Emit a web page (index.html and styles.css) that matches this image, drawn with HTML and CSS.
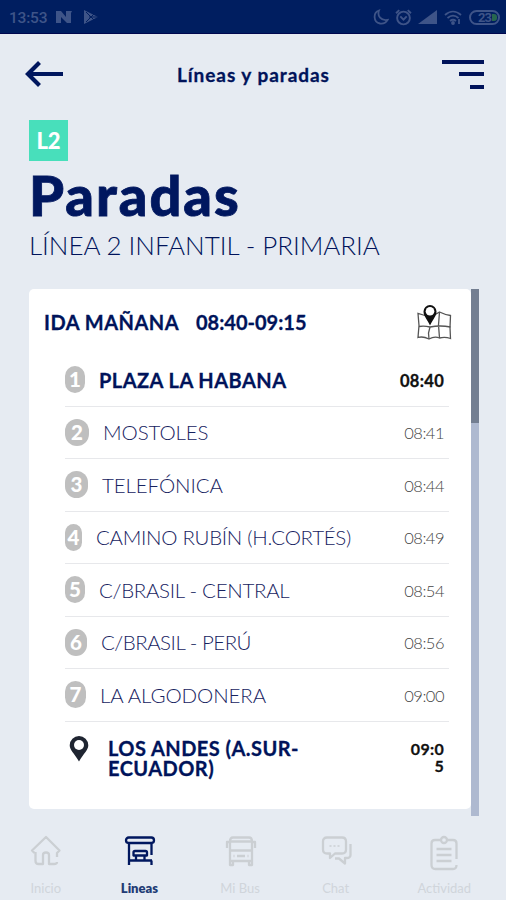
FILE: index.html
```html
<!DOCTYPE html>
<html lang="es">
<head>
<meta charset="utf-8">
<title>Líneas y paradas</title>
<link rel="stylesheet" href="styles.css">
</head>
<body>
<div class="status">
  <span class="clock">13:53</span>
  <svg class="s-n" width="16" height="14" viewBox="0 0 16 14"><path d="M0 13V1h5l5 6V1h6l-1 2v10h-4L5 7v6z" fill="currentColor"/></svg>
  <svg class="s-play" width="16" height="16" viewBox="0 0 16 16"><path d="M1 1v14l14-7z" fill="currentColor"/><path d="M3 3l8 8M3 13l8-8M6 8h9" stroke="#001e60" stroke-width="1"/></svg>
  <span class="grow"></span>
  <svg class="s-moon" width="16" height="16" viewBox="0 0 16 16" fill="none" stroke="currentColor" stroke-width="1.800"><path d="M6 1.500C0 3.500 0 13 7 14.500c3 .5 6-1 7.500-3.500C8 12 4 7 6 1.500z"/></svg>
  <svg class="s-alarm" width="17" height="17" viewBox="0 0 16 16" fill="none" stroke="currentColor" stroke-width="1.800"><circle cx="8" cy="8.500" r="6"/><path d="M1 4l3-3M15 4l-3-3M5 7l3 3 3-3"/></svg>
  <svg class="s-signal" width="20" height="14" viewBox="0 0 20 14"><path d="M0 14L19 0v14z" fill="currentColor"/></svg>
  <svg class="s-wifi" width="18" height="15" viewBox="0 0 18 15" fill="none" stroke="currentColor" stroke-width="1.800"><path d="M1 5c5-4.500 11-4.500 16 0M3.500 8c3.500-3 7.500-3 11 0M6 11c2-1.600 4-1.600 6 0M15 9v5"/><circle cx="9" cy="13" r="1" fill="currentColor"/></svg>
  <span class="battery">23<i class="charge"></i></span>
</div>

<header class="header">
  <svg width="40" height="26" viewBox="0 0 40 26" fill="none" stroke="#00165e" stroke-width="4.200"><path d="M39 13H4M15.500 1.500L4 13 15.500 24.500"/></svg>
  <h2 class="header-title">Líneas y paradas</h2>
  <div class="menu"><i class="bar bar-long"></i><i class="bar bar-mid"></i><i class="bar bar-short"></i></div>
</header>

<section class="heading">
  <span class="line-tag">L2</span>
  <h1 class="title">Paradas</h1>
  <p class="subtitle">LÍNEA 2 INFANTIL - PRIMARIA</p>
</section>

<main class="panel">
  <div class="card">
    <div class="trip">
      <span class="trip-name">IDA MAÑANA</span>
      <span class="trip-hours">08:40-09:15</span>
      <svg class="map" width="36" height="38" viewBox="0 0 36 38"><g fill="none" stroke="#555" stroke-width="1.300"><path d="M9 11.500L2 9.500l1 12-1 12q5-1.500 11 1.500 5.500-3 10.500-1 5.500-1.500 11 .500l-.5-11 .5-12q-6-1-11-3.500l-5 3"/><path d="M13 35l-.500-6L14 23M23.500 34l-1-13 1-13M3 22.500q5-1 11 .5 10-2 20.500 0"/></g><path d="M14 1a6.500 6.500 0 0 0-6.500 6.500C7.500 12 11 15 14 21.500 17 15 20.500 12 20.500 7.500A6.500 6.500 0 0 0 14 1z" fill="#111"/><circle cx="14" cy="7.300" r="4.300" fill="#fff"/></svg>
    </div>
    <ul class="stops">
      <li class="stop strong"><span class="num n1">1</span><span class="name">PLAZA LA HABANA</span><span class="time">08:40</span></li>
      <li class="stop"><span class="num n2">2</span><span class="name">MOSTOLES</span><span class="time">08:41</span></li>
      <li class="stop"><span class="num n3">3</span><span class="name">TELEFÓNICA</span><span class="time">08:44</span></li>
      <li class="stop"><span class="num n4">4</span><span class="name snug">CAMINO RUBÍN (H.CORTÉS)</span><span class="time">08:49</span></li>
      <li class="stop"><span class="num n5">5</span><span class="name snug">C/BRASIL - CENTRAL</span><span class="time">08:54</span></li>
      <li class="stop"><span class="num n6">6</span><span class="name tight">C/BRASIL - PERÚ</span><span class="time">08:56</span></li>
      <li class="stop"><span class="num n7">7</span><span class="name">LA ALGODONERA</span><span class="time">09:00</span></li>
      <li class="stop strong last"><svg class="pin" width="20" height="26" viewBox="0 0 20 26"><path d="M10 0A9.300 9.300 0 0 0 .7 9.300C.7 14 5 17 10 25.500 15 17 19.300 14 19.300 9.300A9.300 9.300 0 0 0 10 0z" fill="#1f2531"/><circle cx="10" cy="9" r="5" fill="#fff"/></svg><span class="name">LOS ANDES (A.SUR-<br>ECUADOR)</span><span class="time">09:0<br>5</span></li>
    </ul>
  </div>
  <div class="track"><div class="thumb"></div></div>
</main>

<nav class="tabs">
  <a class="tab t1"><svg width="32" height="32" viewBox="0 0 32 32"><path d="M4.500 18L2 15.500 16 2l13.500 13.500L27 18v4M5.500 17v9q0 3 3 3H13v-9q0-2.500 3-2.500t3 2.500v9h5q3 0 3-2"/></svg><span>Inicio</span></a>
  <a class="tab t2 active"><svg width="32" height="32" viewBox="0 0 32 32"><rect x="2" y="2.500" width="28" height="5.500" rx="2.700"/><path d="M5 8v22M27.500 8v12M5 25.500h23M27.500 25.500V30M9.500 20.500v-3q0-1.500 1.500-1.500h10.500q1.500 0 1.500 1.500v3zM12 21v4M20.500 21v4"/></svg><span>Lineas</span></a>
  <a class="tab t3"><svg width="32" height="32" viewBox="0 0 32 32"><path d="M8 2.500h16q3 0 3 4V26H5V6.500q0-4 3-4zM5 7H2v6M27 7h3v6M5 15.500h22M8 26v4H5v-4M27 26v4h-3v-4M12 21h8M8.500 21h1M22.500 21h1M5 6.500h22"/></svg><span>Mi Bus</span></a>
  <a class="tab t4"><svg width="32" height="32" viewBox="0 0 32 32"><path d="M6 2.500h15q4 0 4 4v8q0 4-4 4h-7l-5 4.500v-4.500H6q-4 0-4-4v-8q0-4 4-4zM29.500 9v11q0 3-4 3h-1.500v5.500L18 23.500h-4"/><path d="M8.500 11h2M12.500 11h2M16.500 11h2" stroke-width="1.500"/></svg><span>Chat</span></a>
  <a class="tab t5"><svg width="32" height="36" viewBox="0 0 32 36"><path d="M12 5H7Q3.500 5 3.500 8.500V30q0 4 4 4H25q3.500 0 3.500-4M20 5h5q3.500 0 3.500 3.500V24M8.500 14h15M8.500 20h15M8.500 26h15"/><circle cx="16" cy="5" r="3"/></svg><span>Actividad</span></a>
</nav>
</body>
</html>
```
FILE: styles.css
```css
* { box-sizing: border-box; }
body {
  margin: 0;
  width: 506px;
  height: 900px;
  overflow: hidden;
  background: #e6ebf2;
  color: #00135a;
  font-family: Lato, "Liberation Sans", sans-serif;
}
h1, h2, p, ul { margin: 0; padding: 0; list-style: none; }

.status {
  display: flex;
  align-items: center;
  height: 34px;
  padding: 1px 6px 0 9px;
  background: #001e60;
  border-bottom: 1px solid #00084f;
  color: #3e5488;
}
.clock { width: 47px; padding-top: 2px; font: 500 15.500px Roboto, sans-serif; letter-spacing: -.2px; }
.s-play { margin-left: 11px; }
.grow { flex: 1; }
.s-alarm { margin-left: 6px; }
.s-signal { margin-left: 6px; }
.s-wifi { margin-left: 6px; }
.battery {
  position: relative;
  width: 31px;
  height: 15px;
  margin-left: 7px;
  border: 2px solid #3e5488;
  border-radius: 8px;
  font: 700 13px/11px Roboto, sans-serif;
  text-align: center;
  letter-spacing: -1px;
}
.charge { position: absolute; right: 1px; top: 2px; width: 5px; height: 7px; border-radius: 0 3px 3px 0; background: #27664f; }

.header { display: flex; align-items: center; height: 80px; padding: 0 22px 0 24px; }
.header-title { flex: 1; margin-left: 113px; font-size: 19px; font-weight: 700; letter-spacing: .95px; -webkit-text-stroke: .3px; }
.menu { display: flex; flex-direction: column; align-items: flex-end; gap: 8.500px; }
.bar { height: 4px; background: #00135a; }
.bar-long { width: 42px; }
.bar-mid { width: 25px; }
.bar-short { width: 14px; }

.heading { height: 175px; padding: 6px 29px 0; }
.line-tag {
  display: block;
  width: 39px;
  height: 41px;
  background: #48dfbb;
  color: #fff;
  font-size: 22px;
  font-weight: 900;
  line-height: 41px;
  text-align: center;
}
.title { margin-top: 2px; font-size: 56px; font-weight: 900; line-height: 64px; letter-spacing: 2px; color: #00175f; white-space: nowrap; -webkit-text-stroke: .8px; }
.subtitle { margin-top: 2px; font-size: 26px; font-weight: 300; line-height: 32px; letter-spacing: -.05px; white-space: nowrap; }

.panel { display: flex; height: 527px; margin-left: 29px; }
.card { width: 442px; height: 520px; background: #fff; border-radius: 5px; }
.track { width: 8px; background: #aeb9d0; }
.thumb { height: 134px; background: #737e91; }

.trip { display: flex; align-items: center; height: 65px; padding: 1px 19px 0 15px; font-size: 20px; font-weight: 700; letter-spacing: .5px; -webkit-text-stroke: .3px; }
.trip-name { width: 152px; white-space: nowrap; }
.trip-hours { letter-spacing: 0; }
.map { margin-left: auto; margin-top: 2px; }

.stops { margin: 0 22px 0 36px; }
.stop { display: flex; align-items: center; height: 52.500px; padding-right: 5px; border-bottom: 1.500px solid #e7e8eb; }
.num {
  width: 21px;
  height: 27px;
  margin-right: 14px;
  border-radius: 12px;
  background: #bfbfbf;
  color: #fff;
  font-size: 20.500px;
  font-weight: 900;
  line-height: 27px;
  text-align: center;
}
.n1, .n5 { width: 20px; }
.n2 { width: 24px; }
.n3 { width: 23px; }
.n4 { width: 17px; }
.n6 { width: 22px; }
.name { flex: 1; font-size: 20.500px; font-weight: 300; letter-spacing: -.1px; white-space: nowrap; color: #17235f; }
.snug { letter-spacing: -.3px; }
.tight { letter-spacing: -.5px; }
.time { padding-top: 2px; color: #444; font-size: 16.500px; font-weight: 300; letter-spacing: -.5px; text-align: right; }
.strong .name { font-size: 20px; font-weight: 700; letter-spacing: .45px; color: #00135a; -webkit-text-stroke: .3px; }
.strong .time { color: #111; font-size: 16.500px; font-weight: 700; letter-spacing: .3px; -webkit-text-stroke: .3px; }
.last { align-items: flex-start; height: 88px; padding-top: 14px; border: 0; }
.last .name { margin-left: 19px; line-height: 20px; padding-top: 2px; }
.strong.last .time { line-height: 17px; padding-top: 4px; font-size: 16px; }
.pin { margin-left: 4px; }

.tabs { display: flex; height: 84px; padding-top: 19px; }
.tab { display: flex; flex-direction: column; align-items: center; justify-content: space-between; height: 61px; color: #d0d5db; font-size: 13px; line-height: 15px; }
.tab svg { fill: none; stroke: #cbcfd3; stroke-width: 2.300; stroke-linejoin: round; }
.tab.active { color: #223b75; font-weight: 800; }
.active svg { stroke: #00175f; }
.t1 { width: 92px; }
.t2 { width: 96px; }
.t3 { width: 106px; }
.t4 { width: 86px; }
.t5 { width: 128px; }
.t2 svg, .t3 svg { margin-left: 2px; }
.t4 svg { margin-left: 3px; }
.t5 svg { margin-left: 4px; }
.t5 span { margin-left: 4px; }
```
